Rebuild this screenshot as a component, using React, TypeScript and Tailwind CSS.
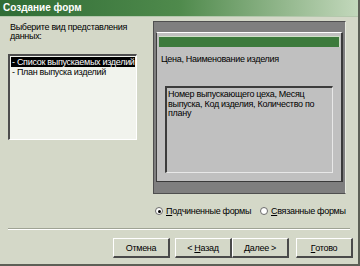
import React, { useState } from 'react';

const VIEWS = ['- Список выпускаемых изделий', '- План выпуска изделий'];

const font = { fontFamily: '"Liberation Sans", Arial, sans-serif' };

function Radio({ checked, label, hot }: { checked: boolean; label: string; hot: string }) {
  return (
    <div className="flex items-center gap-[3px] whitespace-nowrap">
      <div className="w-[8px] h-[8px] rounded-full bg-white border border-[#6b6b6b] flex items-center justify-center">
        {checked && <div className="w-[3px] h-[3px] rounded-full bg-black" />}
      </div>
      <span>
        <span className="underline">{hot}</span>
        {label}
      </span>
    </div>
  );
}

function Button({ children }: { children: React.ReactNode }) {
  return (
    <button className="w-[57px] h-[20px] bg-[#d4d8c8] border-t border-l border-white border-r-2 border-b-2 border-r-[#4a4a4a] border-b-[#4a4a4a] text-[9px] tracking-[-0.3px] text-black flex items-center justify-center whitespace-nowrap">
      {children}
    </button>
  );
}

export default function App() {
  const [selected, setSelected] = useState(0);
  const [linked, setLinked] = useState(false);

  return (
    <div
      className="w-[360px] h-[266px] bg-[#d4d8c8] flex flex-col border-r-2 border-b-2 border-[#5c5f56] text-black text-[9px] leading-[10px] tracking-[-0.3px] overflow-hidden"
      style={font}
    >
      <div className="h-[17px] shrink-0 bg-gradient-to-r from-[#2f6c35] via-[#4f8a4c] to-[#c3d8bc] text-white font-bold text-[10px] tracking-normal flex items-center pl-[3px] border-b border-[#b4c8ad]">
        Создание форм
      </div>

      <div className="flex pt-[4px]">
        <div className="ml-[8px] w-[129px] flex flex-col">
          <div className="mt-[2px] pl-[2px] leading-[9px]">
            Выберите вид представления
            <br />
            данных:
          </div>
          <div className="mt-[13px] h-[86px] bg-[#f1f3ed] border-t-2 border-l-2 border-[#4d4d4d] border-r border-b border-r-white border-b-white p-[1px]">
            {VIEWS.map((v, i) => (
              <div
                key={v}
                onClick={() => setSelected(i)}
                className={`h-[10px] pl-[1px] whitespace-nowrap cursor-pointer ${
                  i === selected ? 'bg-black text-white' : 'text-black'
                }`}
              >
                {v}
              </div>
            ))}
          </div>
        </div>

        <div className="ml-[16px] w-[193px] flex flex-col">
          <div className="h-[173px] bg-[#7f7f7f] border border-[#4f4f4f] border-r-[#e6e9de] pt-[10px] pl-[2px] pr-[2px] pb-[11px]">
            <div className="h-full bg-[#c0c0c0] border-l border-t border-[#3f3f3f] border-t-white border-r-2 border-b border-r-[#3a3a3a] border-b-[#3a3a3a] pt-[3px] pl-[2px] pr-[1px] flex flex-col">
              <div className="h-[11px] bg-[#3c7a3c] border-t border-r border-[#cfe0c8]" />
              <div className="mt-[7px] pl-[2px]">Цена, Наименование изделия</div>
              <div className="mt-[22px] ml-[6px] w-[168px] h-[87px] bg-[#c0c0c0] border-t-2 border-l-2 border-[#3c3c3c] border-r border-b border-r-[#e8e8e8] border-b-[#e8e8e8] pl-[1px] pt-[2px] leading-[9.5px]">
                Номер выпускающего цеха, Месяц
                <br />
                выпуска, Код изделия, Количество по
                <br />
                плану
              </div>
            </div>
          </div>

          <div className="mt-[11px] h-[12px] flex items-center pl-[2px]">
            <div onClick={() => setLinked(false)} className="cursor-pointer w-[105px]">
              <Radio checked={!linked} hot="П" label="одчиненные формы" />
            </div>
            <div onClick={() => setLinked(true)} className="cursor-pointer">
              <Radio checked={linked} hot="С" label="вязанные формы" />
            </div>
          </div>
        </div>
      </div>

      <div className="mt-[11px] mx-[8px] border-t border-[#9fa394] border-b border-b-white" />

      <div className="mt-[8px] flex pl-[113px]">
        <Button>Отмена</Button>
        <div className="ml-[5px] flex">
          <Button>
            &lt; <span className="underline ml-[2px]">Н</span>азад
          </Button>
          <Button>
            <span className="underline">Д</span>алее &gt;
          </Button>
        </div>
        <div className="ml-[7px]">
          <Button>
            <span className="underline">Г</span>отово
          </Button>
        </div>
      </div>
    </div>
  );
}
